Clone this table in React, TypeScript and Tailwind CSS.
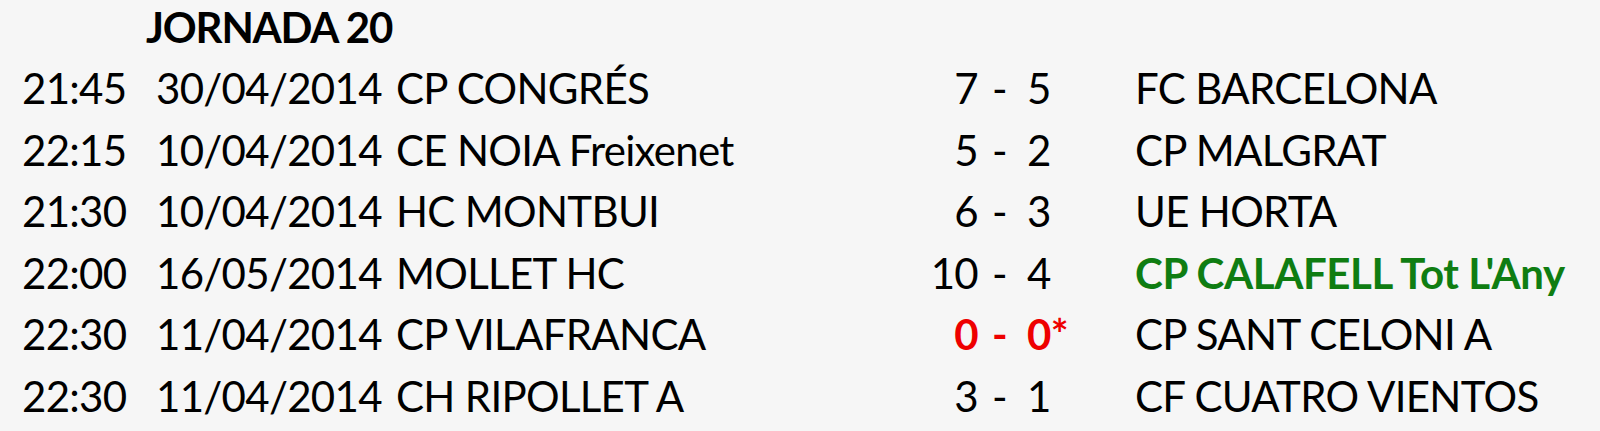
import React from 'react';

type Match = {
  time: string;
  date: string;
  home: string;
  homeScore: string;
  awayScore: string;
  away: string;
  highlight?: 'green' | 'red';
};

const matches: Match[] = [
  { time: '21:45', date: '30/04/2014', home: 'CP CONGRÉS', homeScore: '7', awayScore: '5', away: 'FC BARCELONA' },
  { time: '22:15', date: '10/04/2014', home: 'CE NOIA Freixenet', homeScore: '5', awayScore: '2', away: 'CP MALGRAT' },
  { time: '21:30', date: '10/04/2014', home: 'HC MONTBUI', homeScore: '6', awayScore: '3', away: 'UE HORTA' },
  { time: '22:00', date: '16/05/2014', home: 'MOLLET HC', homeScore: '10', awayScore: '4', away: "CP CALAFELL Tot L'Any", highlight: 'green' },
  { time: '22:30', date: '11/04/2014', home: 'CP VILAFRANCA', homeScore: '0', awayScore: '0*', away: 'CP SANT CELONI A', highlight: 'red' },
  { time: '22:30', date: '11/04/2014', home: 'CH RIPOLLET A', homeScore: '3', awayScore: '1', away: 'CF CUATRO VIENTOS' },
];

const MatchRow = ({ m }: { m: Match }) => {
  const scoreClass = m.highlight === 'red' ? 'text-[#ee0000] font-bold' : '';
  const awayClass = m.highlight === 'green' ? 'text-[#0f7d12] font-bold tracking-[-0.4px]' : '';
  return (
    <div className="flex h-[61.5px] items-center whitespace-nowrap pl-[22px] leading-[61.5px]">
      <span className="w-[134px]">{m.time}</span>
      <span className="w-[240px]">{m.date}</span>
      <span className="w-[506px]">{m.home}</span>
      <span className={`w-[76px] text-right ${scoreClass}`}>{m.homeScore}</span>
      <span className={`w-[49px] pl-[14px] ${scoreClass}`}>-</span>
      <span className={`w-[108px] ${scoreClass}`}>{m.awayScore}</span>
      <span className={awayClass}>{m.away}</span>
    </div>
  );
};

export default function App() {
  return (
    <div className="h-[431px] w-[1600px] overflow-hidden bg-[#f6f6f6] font-['Lato',sans-serif] text-[42px] tracking-[-0.7px] text-black">
      <h1 className="pl-[146px] pt-[2px] text-[42px] font-bold leading-[50px] tracking-[-1.2px]">JORNADA 20</h1>
      <div className="mt-[6px]">
        {matches.map((m, i) => (
          <MatchRow key={i} m={m} />
        ))}
      </div>
    </div>
  );
}
